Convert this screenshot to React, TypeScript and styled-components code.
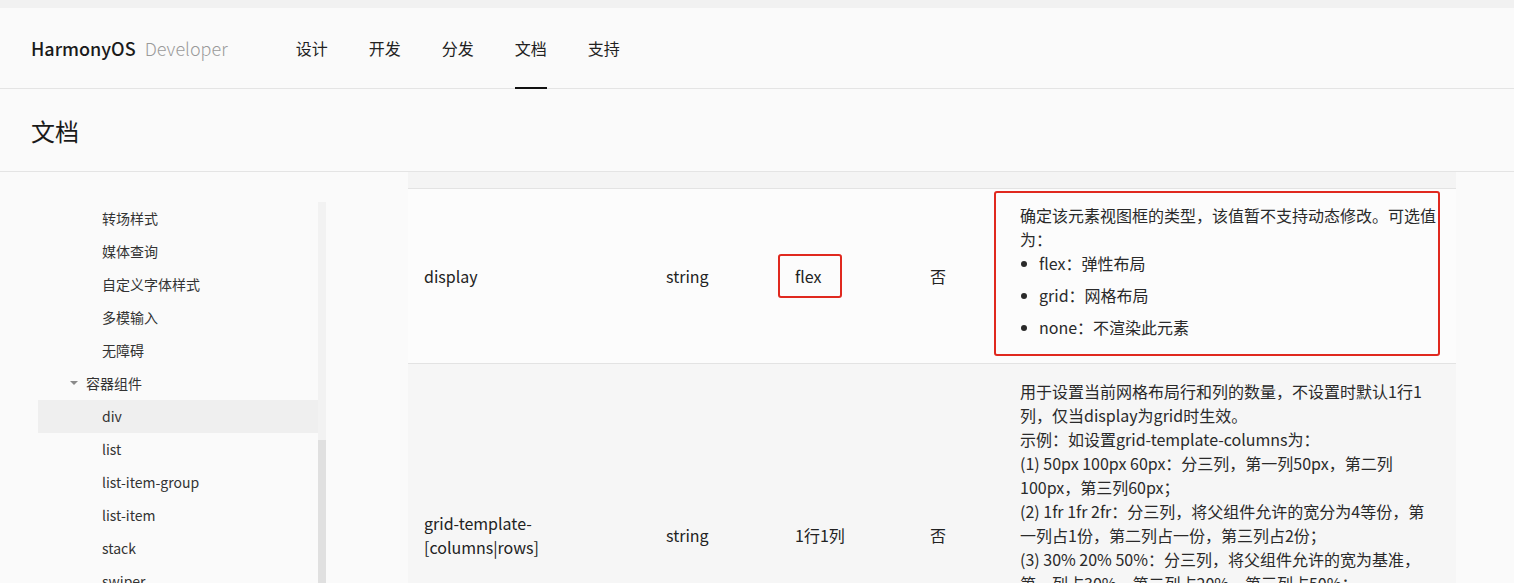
import * as React from 'react';
import styled, { createGlobalStyle } from 'styled-components';

const GlobalStyle = createGlobalStyle`
    html,
    body {
        margin: 0;
        padding: 0;
        background: #fafafa;
        overflow: hidden;
    }

    body {
        font-family: 'Noto Sans CJK SC', 'Noto Sans', sans-serif;
        color: #222;
    }
`;

const Page = styled.div`
    min-height: 100vh;
    display: flex;
    flex-direction: column;
`;

const TopStrip = styled.div`
    height: 8px;
    background: #f1f1f1;
`;

const Header = styled.header`
    height: 80px;
    display: flex;
    align-items: center;
    padding-left: 31px;
    border-bottom: 1px solid #e4e4e4;
    background: #fafafa;
`;

const Logo = styled.div`
    display: flex;
    align-items: baseline;
    gap: 9px;
    font-size: 18px;
    white-space: nowrap;
`;

const Brand = styled.span`
    font-weight: 500;
    color: #1a1a1a;
`;

const BrandSub = styled.span`
    font-weight: 300;
    color: #9a9a9a;
`;

const Nav = styled.nav`
    display: flex;
    gap: 41px;
    margin-left: 68px;
    align-self: stretch;
`;

const NavItem = styled.a<{ $active?: boolean }>`
    position: relative;
    display: flex;
    align-items: center;
    font-size: 16px;
    color: #222;
    text-decoration: none;
    cursor: pointer;

    &::after {
        content: '';
        position: absolute;
        left: 0;
        right: 0;
        bottom: -1px;
        height: 2px;
        background: ${(p) => (p.$active ? '#111' : 'transparent')};
    }
`;

const TitleBar = styled.div`
    height: 82px;
    display: flex;
    align-items: center;
    padding-left: 31px;
    border-bottom: 1px solid #e4e4e4;
`;

const Title = styled.h1`
    margin: 0;
    font-size: 24px;
    font-weight: 400;
    color: #1a1a1a;
`;

const Main = styled.div`
    flex: 1;
    display: flex;
`;

const Sidebar = styled.aside`
    width: 408px;
    flex-shrink: 0;
    display: flex;
    padding-top: 30px;
    padding-left: 38px;
    box-sizing: border-box;
`;

const Tree = styled.ul`
    list-style: none;
    margin: 0;
    padding: 0;
    width: 280px;
`;

const TreeItem = styled.li<{ $level: number; $selected?: boolean }>`
    height: 33px;
    display: flex;
    align-items: center;
    padding-left: ${(p) => (p.$level === 1 ? 32 : 64)}px;
    padding-bottom: 1px;
    box-sizing: border-box;
    font-size: 14px;
    color: #333;
    background: ${(p) => (p.$selected ? '#efefef' : 'transparent')};
    white-space: nowrap;
`;

const Caret = styled.span`
    width: 0;
    height: 0;
    margin-right: 8px;
    border-left: 4px solid transparent;
    border-right: 4px solid transparent;
    border-top: 4px solid #8a8a8a;
`;

const Scrollbar = styled.div`
    width: 8px;
    min-height: 420px;
    background: #f2f2f2;
`;

const Thumb = styled.div`
    margin-top: 238px;
    height: 400px;
    background: #e0e0e0;
`;

const Content = styled.section`
    width: 1048px;
    flex-shrink: 0;
`;

const HeadBand = styled.div`
    height: 16px;
    background: #f4f4f4;
    border-bottom: 1px solid #e3e3e3;
`;

const Row = styled.div<{ $tone: 'light' | 'gray' }>`
    display: grid;
    grid-template-columns: 242px 129px 135px 90px 452px;
    background: ${(p) => (p.$tone === 'light' ? '#fcfcfc' : '#f6f6f6')};
    border-bottom: 1px solid #e3e3e3;
`;

const Cell = styled.div`
    display: flex;
    align-items: center;
    padding: 0 16px;
    font-size: 16px;
    line-height: 24px;
    color: #222;
`;

const NameText = styled.span`
    max-width: 150px;
`;

const Marked = styled.span`
    display: inline-block;
    margin-left: -17px;
    padding: 0 19px 0 15px;
    line-height: 40px;
    border: 2px solid #e0291f;
    border-radius: 3px;
`;

const DescCell = styled.div<{ $boxed?: boolean }>`
    padding: ${(p) => (p.$boxed ? '2px 0 7px 0' : '15px 16px')};
    font-size: 16px;
    line-height: 24px;
    color: #2a2a2a;
`;

const MarkedBox = styled.div`
    box-sizing: border-box;
    width: 446px;
    margin-left: -10px;
    padding: 10px 0 15px 24px;
    border: 2px solid #e0291f;
    border-radius: 3px;
`;

const Line = styled.div`
    white-space: nowrap;
`;

const Bullets = styled.ul`
    list-style: none;
    margin: 0;
    padding: 0;
    display: flex;
    flex-direction: column;
    gap: 8px;
`;

const Bullet = styled.li`
    position: relative;
    padding-left: 19px;
    white-space: nowrap;

    &::before {
        content: '';
        position: absolute;
        left: 1px;
        top: 10px;
        width: 6px;
        height: 6px;
        border-radius: 50%;
        background: #2a2a2a;
    }
`;

const navItems = ['设计', '开发', '分发', '文档', '支持'];

const treeItems: { label: string; level: number; selected?: boolean; group?: boolean }[] = [
    { label: '转场样式', level: 2 },
    { label: '媒体查询', level: 2 },
    { label: '自定义字体样式', level: 2 },
    { label: '多模输入', level: 2 },
    { label: '无障碍', level: 2 },
    { label: '容器组件', level: 1, group: true },
    { label: 'div', level: 2, selected: true },
    { label: 'list', level: 2 },
    { label: 'list-item-group', level: 2 },
    { label: 'list-item', level: 2 },
    { label: 'stack', level: 2 },
    { label: 'swiper', level: 2 },
    { label: 'tabs', level: 2 },
];

const gridLines = [
    '用于设置当前网格布局行和列的数量，不设置时默认1行1',
    '列，仅当display为grid时生效。',
    '示例：如设置grid-template-columns为：',
    '(1) 50px 100px 60px：分三列，第一列50px，第二列',
    '100px，第三列60px；',
    '(2) 1fr 1fr 2fr：分三列，将父组件允许的宽分为4等份，第',
    '一列占1份，第二列占一份，第三列占2份；',
    '(3) 30% 20% 50%：分三列，将父组件允许的宽为基准，',
    '第一列占30%，第二列占20%，第三列占50%；',
    '(4) repeat(2,100px)：分两列，第一列100px，第二列',
    '100px；',
    '(5) auto 1fr 1fr：分三列，第一列自适应内部子组件所需',
    '宽度，剩余空间分为两等份，第二列占一份，第三列占一份。',
];

function App() {
    return (
        <Page>
            <GlobalStyle />
            <TopStrip />
            <Header>
                <Logo>
                    <Brand>HarmonyOS</Brand>
                    <BrandSub>Developer</BrandSub>
                </Logo>
                <Nav>
                    {navItems.map((item) => (
                        <NavItem key={item} $active={item === '文档'}>
                            {item}
                        </NavItem>
                    ))}
                </Nav>
            </Header>
            <TitleBar>
                <Title>文档</Title>
            </TitleBar>
            <Main>
                <Sidebar>
                    <Tree>
                        {treeItems.map((item) => (
                            <TreeItem key={item.label} $level={item.level} $selected={item.selected}>
                                {item.group && <Caret />}
                                {item.label}
                            </TreeItem>
                        ))}
                    </Tree>
                    <Scrollbar>
                        <Thumb />
                    </Scrollbar>
                </Sidebar>
                <Content>
                    <HeadBand />
                    <Row $tone="light">
                        <Cell>display</Cell>
                        <Cell>string</Cell>
                        <Cell>
                            <Marked>flex</Marked>
                        </Cell>
                        <Cell>否</Cell>
                        <DescCell $boxed>
                            <MarkedBox>
                                <Line>确定该元素视图框的类型，该值暂不支持动态修改。可选值</Line>
                                <Line>为：</Line>
                                <Bullets>
                                    <Bullet>flex：弹性布局</Bullet>
                                    <Bullet>grid：网格布局</Bullet>
                                    <Bullet>none：不渲染此元素</Bullet>
                                </Bullets>
                            </MarkedBox>
                        </DescCell>
                    </Row>
                    <Row $tone="gray">
                        <Cell>
                            <NameText>
                                grid-template-
                                <wbr />
                                [columns|rows]
                            </NameText>
                        </Cell>
                        <Cell>string</Cell>
                        <Cell>1行1列</Cell>
                        <Cell>否</Cell>
                        <DescCell>
                            {gridLines.map((line) => (
                                <Line key={line}>{line}</Line>
                            ))}
                        </DescCell>
                    </Row>
                </Content>
            </Main>
        </Page>
    );
}

export default App;
